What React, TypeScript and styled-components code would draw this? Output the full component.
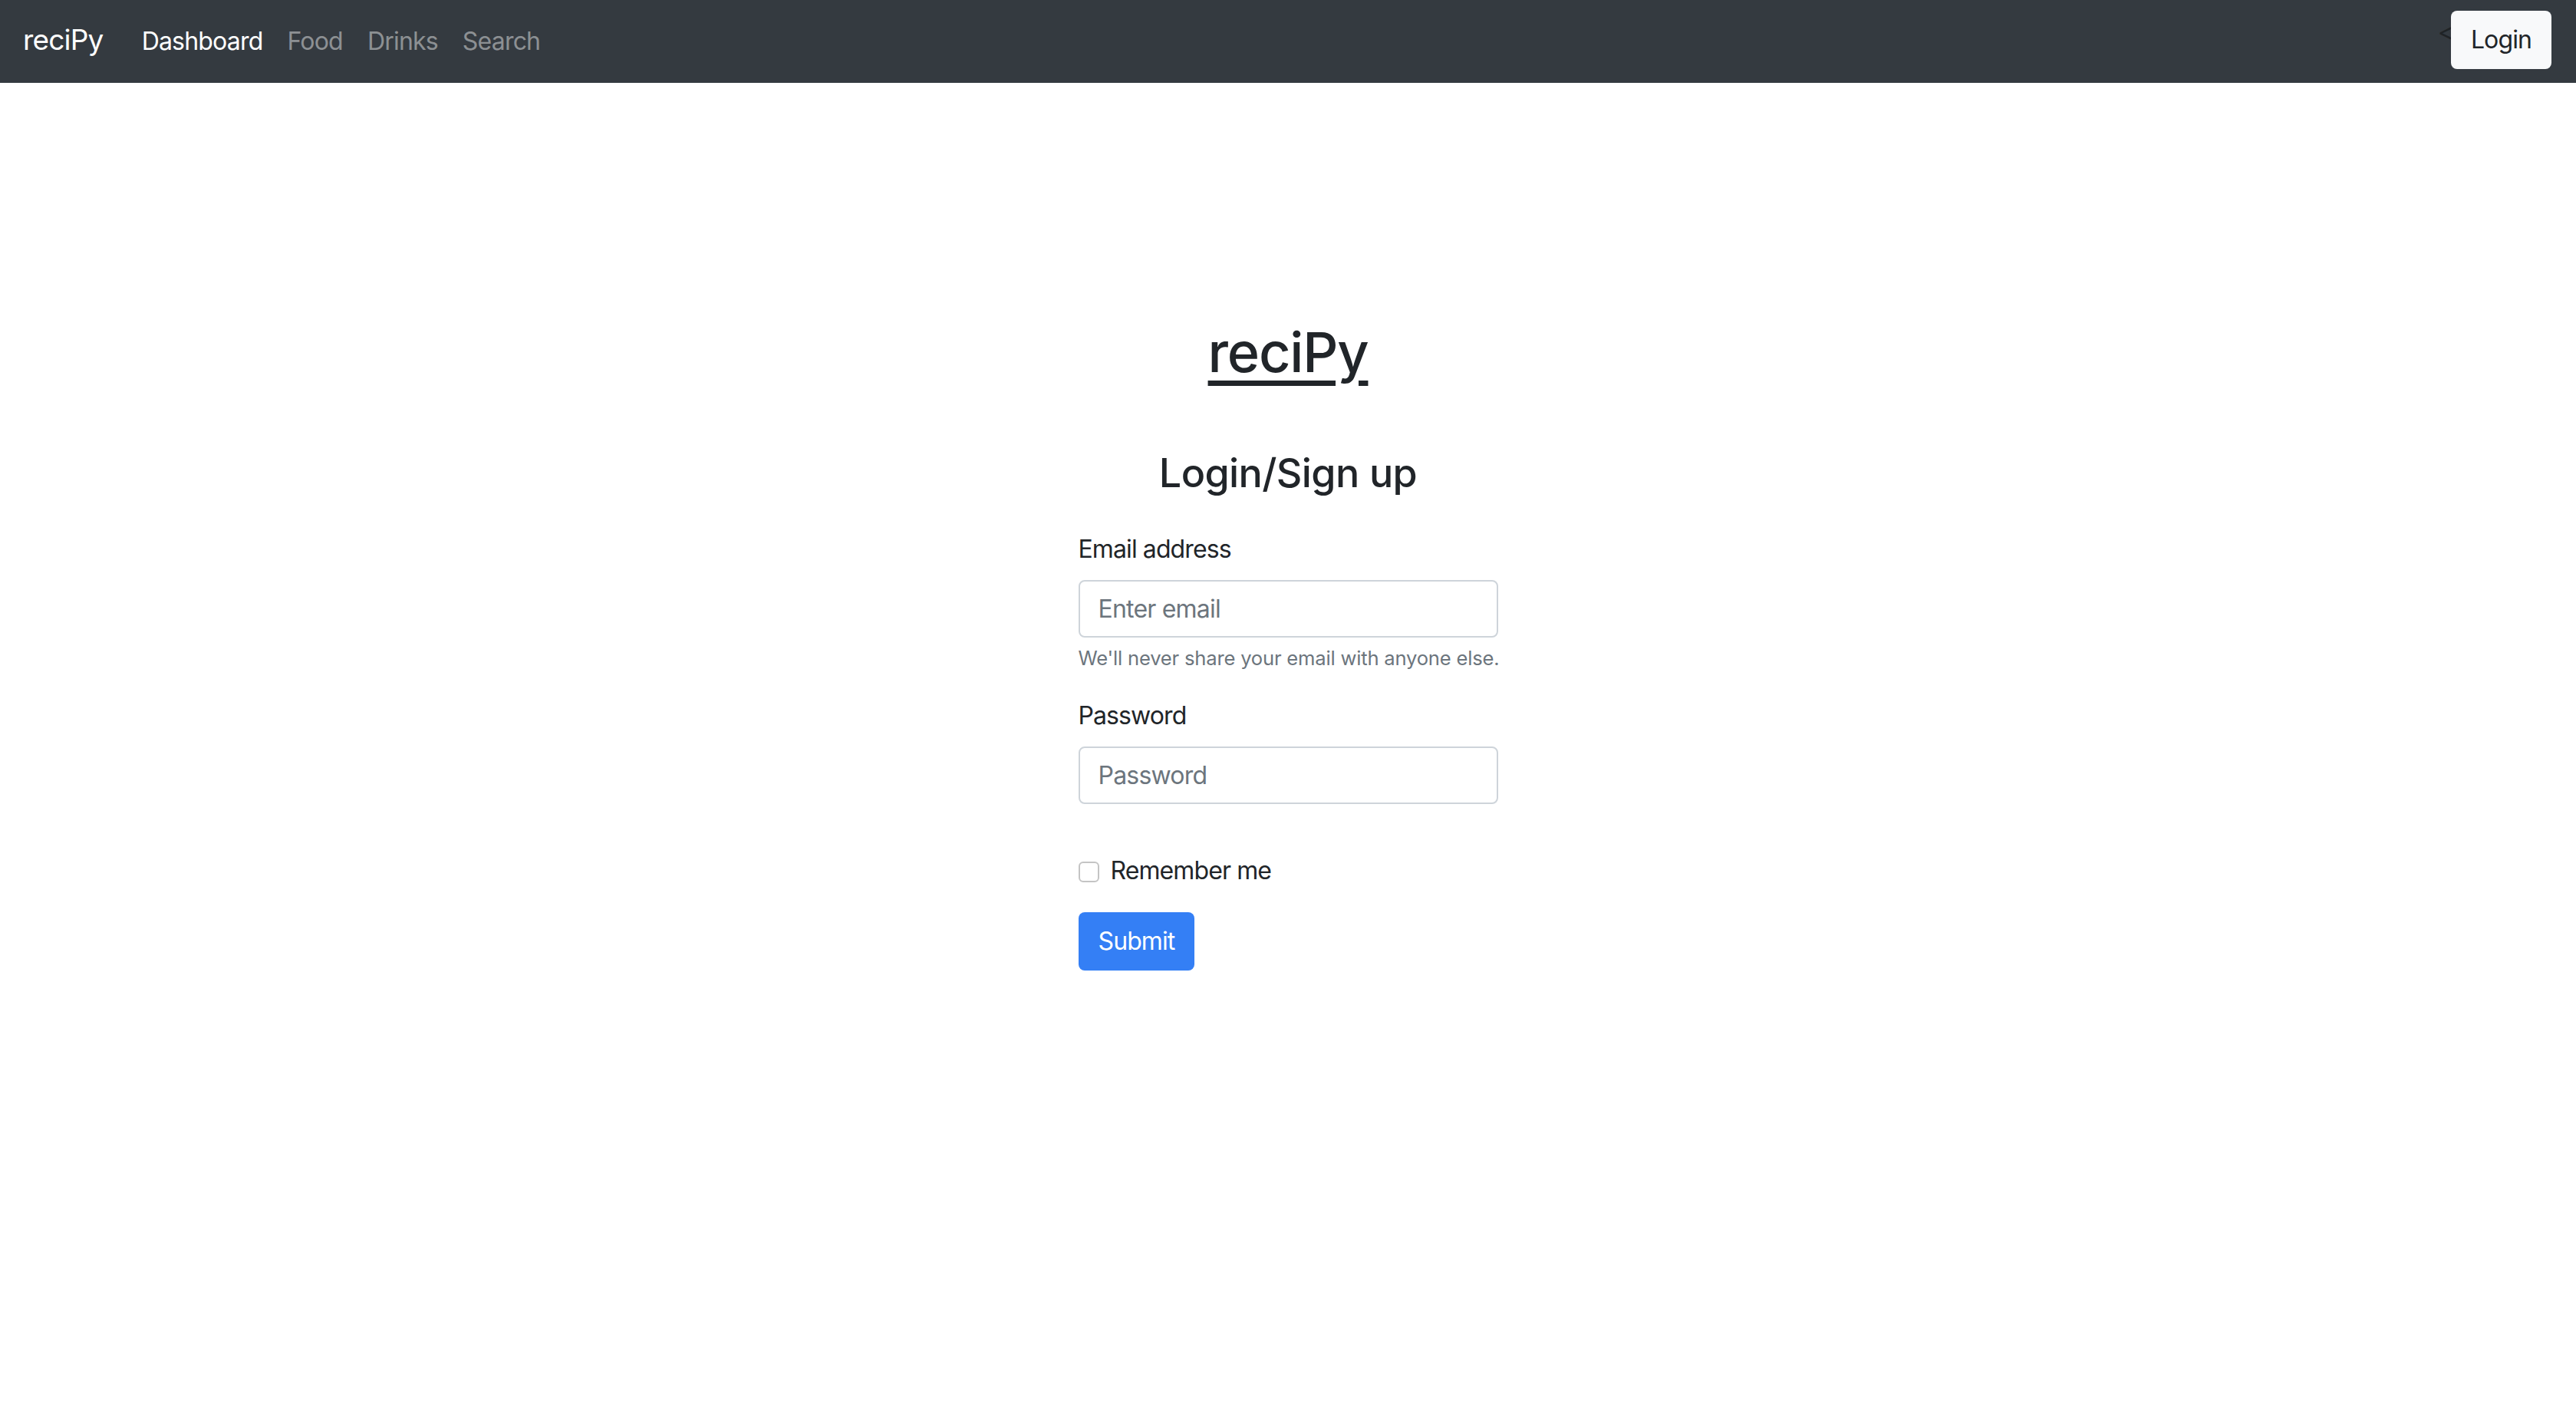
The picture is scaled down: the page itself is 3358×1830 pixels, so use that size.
import React from "react";
import styled, { createGlobalStyle } from "styled-components";

const GlobalStyle = createGlobalStyle`
  html, body {
    margin: 0;
    padding: 0;
    background: #ffffff;
  }
  body {
    font-family: Inter, "Liberation Sans", Arial, sans-serif;
    color: #212529;
    letter-spacing: -0.9px;
  }
  * {
    box-sizing: border-box;
  }
`;

const Page = styled.div`
  min-height: 1830px;
  display: flex;
  flex-direction: column;
`;

const Navbar = styled.nav`
  display: flex;
  align-items: center;
  height: 108px;
  padding: 0 32px 0 30px;
  background-color: #343a40;
`;

const Brand = styled.a`
  font-size: 37px;
  line-height: 60px;
  letter-spacing: -0.8px;
  color: #ffffff;
  margin-right: 34px;
  text-decoration: none;
  margin-bottom: 4px;
`;

const NavList = styled.div`
  display: flex;
  align-items: center;
`;

const NavLink = styled.a<{ active?: boolean }>`
  padding: 0 16px;
  font-size: 32px;
  line-height: 48px;
  letter-spacing: -0.8px;
  text-decoration: none;
  color: ${(p) => (p.active ? "#ffffff" : "rgba(255, 255, 255, 0.45)")};
`;

const RightSide = styled.div`
  margin-left: auto;
  display: flex;
  align-items: center;
`;

// stray "<" that sits behind the login button
const Caret = styled.span`
  font-size: 32px;
  line-height: 32px;
  color: #1f2326;
  margin-right: -3px;
  margin-bottom: 24px;
`;

const LoginButton = styled.button`
  height: 76px;
  padding: 0 26px;
  border: none;
  border-radius: 8px;
  background-color: #f8f9fa;
  color: #212529;
  font-family: inherit;
  font-size: 32px;
  line-height: 48px;
  letter-spacing: -0.9px;
  margin-top: -4px;
`;

const Main = styled.main`
  display: flex;
  flex-direction: column;
  align-items: center;
  padding-top: 303px;
`;

const Title = styled.h1`
  margin: 0 0 76px;
  font-size: 72px;
  font-weight: 500;
  line-height: 96px;
  letter-spacing: -1.2px;
  a {
    color: #212529;
    text-decoration: underline;
    text-decoration-thickness: 7px;
    text-underline-offset: 11px;
  }
`;

const Subtitle = styled.h3`
  margin: 0 0 42px;
  font-size: 52px;
  font-weight: 500;
  line-height: 67px;
  letter-spacing: -0.6px;
`;

const Form = styled.form`
  width: 547px;
`;

const FieldGroup = styled.div<{ gap?: number }>`
  margin-bottom: ${(p) => p.gap ?? 32}px;
`;

const Label = styled.label`
  display: block;
  margin-bottom: 16px;
  font-size: 32px;
  line-height: 48px;
`;

const Input = styled.input`
  display: block;
  width: 100%;
  height: 75px;
  padding: 0 24px;
  border: 2px solid #ced4da;
  border-radius: 8px;
  font-family: inherit;
  font-size: 32px;
  letter-spacing: -0.8px;
  color: #495057;
  background: #ffffff;
  outline: none;
  &::placeholder {
    color: #6c757d;
  }
`;

const HelpText = styled.small`
  display: block;
  margin-top: 8px;
  font-size: 25.6px;
  line-height: 38px;
  letter-spacing: -0.2px;
  white-space: nowrap;
  color: #6c757d;
`;

const CheckRow = styled.div`
  display: flex;
  align-items: center;
  margin-bottom: 30px;
`;

const Checkbox = styled.input`
  appearance: none;
  -webkit-appearance: none;
  width: 27px;
  height: 27px;
  margin: 2px 15px 0 0;
  border: 2px solid #c4c4c4;
  border-radius: 6px;
  background: #ffffff;
`;

const CheckLabel = styled.label`
  font-size: 32px;
  line-height: 48px;
`;

const SubmitButton = styled.button`
  height: 76px;
  padding: 0 26px;
  border: none;
  border-radius: 8px;
  background-color: #347ff5;
  color: #ffffff;
  font-family: inherit;
  font-size: 32px;
  line-height: 48px;
  letter-spacing: -0.9px;
`;

export default function App() {
  return (
    <Page>
      <GlobalStyle />
      <Navbar>
        <Brand href="#">reciPy</Brand>
        <NavList>
          <NavLink href="#" active>
            Dashboard
          </NavLink>
          <NavLink href="#">Food</NavLink>
          <NavLink href="#">Drinks</NavLink>
          <NavLink href="#">Search</NavLink>
        </NavList>
        <RightSide>
          <Caret>&lt;</Caret>
          <LoginButton>Login</LoginButton>
        </RightSide>
      </Navbar>
      <Main>
        <Title>
          <a href="#">reciPy</a>
        </Title>
        <Subtitle>Login/Sign up</Subtitle>
        <Form onSubmit={(e) => e.preventDefault()}>
          <FieldGroup>
            <Label htmlFor="email">Email address</Label>
            <Input id="email" type="email" placeholder="Enter email" />
            <HelpText>We'll never share your email with anyone else.</HelpText>
          </FieldGroup>
          <FieldGroup gap={63}>
            <Label htmlFor="password">Password</Label>
            <Input id="password" type="password" placeholder="Password" />
          </FieldGroup>
          <CheckRow>
            <Checkbox id="remember" type="checkbox" />
            <CheckLabel htmlFor="remember">Remember me</CheckLabel>
          </CheckRow>
          <SubmitButton type="submit">Submit</SubmitButton>
        </Form>
      </Main>
    </Page>
  );
}
